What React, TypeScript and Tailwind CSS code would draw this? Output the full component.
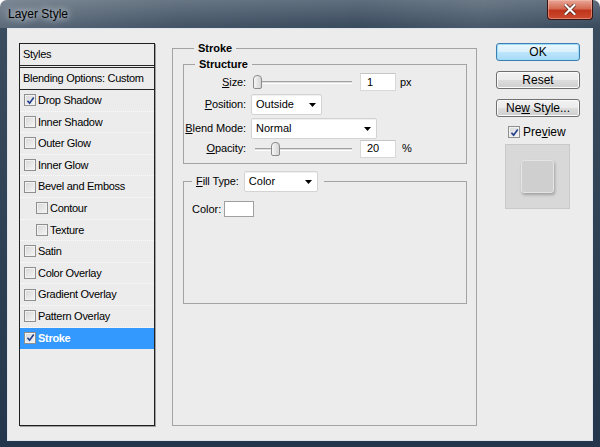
import React from 'react'

type StyleItem = {
  label: string
  checked?: boolean
  sub?: boolean
  active?: boolean
}

const styleItems: StyleItem[] = [
  { label: 'Drop Shadow', checked: true },
  { label: 'Inner Shadow' },
  { label: 'Outer Glow' },
  { label: 'Inner Glow' },
  { label: 'Bevel and Emboss' },
  { label: 'Contour', sub: true },
  { label: 'Texture', sub: true },
  { label: 'Satin' },
  { label: 'Color Overlay' },
  { label: 'Gradient Overlay' },
  { label: 'Pattern Overlay' },
  { label: 'Stroke', checked: true, active: true },
]

function Check({ checked }: { checked?: boolean }) {
  return (
    <span className="flex h-[12px] w-[12px] shrink-0 items-center justify-center border border-[#8e8f8f] bg-[linear-gradient(135deg,#d6d6d6,#f6f6f6)] shadow-[inset_0_0_0_1px_#f2f2f2]">
      {checked && (
        <svg viewBox="0 0 10 10" className="h-[9px] w-[9px]">
          <path d="M1.6 5.2 L4 7.9 L8.6 1.6" fill="none" stroke="#23408e" strokeWidth="1.8" />
        </svg>
      )}
    </span>
  )
}

function Arrow() {
  return (
    <svg viewBox="0 0 7 4" className="h-[4px] w-[7px]">
      <path d="M0 0 H7 L3.5 4 Z" fill="#000" />
    </svg>
  )
}

function Select({ value, width }: { value: string; width: string }) {
  return (
    <div
      className={`flex h-[21px] ${width} items-center justify-between rounded-[2px] border border-[#d3d3d3] bg-white pl-[4px] pr-[5px] text-[11px] text-black shadow-[inset_0_1px_0_#f0f0f0]`}
    >
      <span>{value}</span>
      <Arrow />
    </div>
  )
}

function Slider({ width, thumb }: { width: string; thumb: number }) {
  return (
    <div className={`relative h-[14px] ${width}`}>
      <div className="absolute left-0 right-0 top-[6px] h-[3px] border-t border-b border-t-[#a3a3a3] border-b-white bg-[#dcdcdc]" />
      {/* thumb */}
      <div
        className="absolute top-0 h-[14px] w-[9px] rounded-t-[4px] rounded-b-[2px] border border-[#8c8c8c] bg-[linear-gradient(90deg,#f6f6f6,#d4d4d4)]"
        style={{ left: thumb }}
      />
    </div>
  )
}

function NumInput({ value }: { value: string }) {
  return (
    <div className="flex h-[18px] w-[36px] items-center border border-[#d8d8d8] border-t-[#c6c6c6] bg-white pl-[6px] text-[11px] text-black">
      {value}
    </div>
  )
}

function Button({ children, primary }: { children: React.ReactNode; primary?: boolean }) {
  return (
    <button
      className={`flex h-[18px] w-[84px] items-center justify-center rounded-[3px] border text-[12px] leading-none text-black ${
        primary
          ? 'border-[#3c7fb1] bg-[linear-gradient(#eaf6fd_0%,#d9f0fc_49%,#bee6fd_50%,#a7d9f5_100%)] shadow-[inset_0_0_0_1px_#9edcf7]'
          : 'border-[#707070] bg-[linear-gradient(#f2f2f2_0%,#ebebeb_49%,#dddddd_50%,#cfcfcf_100%)] shadow-[inset_0_0_0_1px_#fbfbfb]'
      }`}
    >
      {children}
    </button>
  )
}

export default function App() {
  return (
    <div className="h-[447px] w-[600px] overflow-hidden rounded-t-[7px] bg-[linear-gradient(180deg,#5f6e7d_0px,#3b4c5f_26px,#2d3f52_60%,#23364b_100%)] font-['Liberation_Sans',Arial,sans-serif]">
      {/* Title bar */}
      <div className="flex h-[28px] items-start justify-between bg-[linear-gradient(100deg,rgba(255,255,255,0.18)_0%,rgba(255,255,255,0.05)_30%,rgba(255,255,255,0)_60%,rgba(255,255,255,0.08)_80%,rgba(255,255,255,0)_100%)]">
        <span className="ml-[8px] mt-[7px] text-[12px] leading-[15px] text-black [text-shadow:0_0_6px_rgba(230,236,242,0.9),0_0_10px_rgba(230,236,242,0.7)]">
          Layer Style
        </span>
        <div className="mr-[7px] flex h-[20px] w-[46px] items-center justify-center rounded-b-[4px] border border-t-0 border-[#3b1510] bg-[linear-gradient(#e8a898_0%,#d46a52_45%,#c0361c_55%,#cc4a30_100%)] shadow-[inset_0_0_0_1px_rgba(255,200,190,0.45)]">
          <svg viewBox="0 0 12 11" className="h-[11px] w-[12px]">
            <path d="M1.5 1 L10.5 10 M10.5 1 L1.5 10" stroke="#4a1a12" strokeWidth="3.6" strokeLinecap="square" />
            <path d="M1.5 1 L10.5 10 M10.5 1 L1.5 10" stroke="#ffffff" strokeWidth="2.2" strokeLinecap="square" />
          </svg>
        </div>
      </div>

      {/* Dialog body */}
      <div className="mx-[7px] flex h-[413px] items-start border border-[#dfe5eb] bg-[#ececec] text-[11px] text-black">
        {/* Styles list */}
        <div className="ml-[11px] mt-[14px] flex h-[383px] w-[136px] flex-col border border-[#1f1f1f] shadow-[1px_1px_0_#a0a0a0]">
          <div className="flex h-[22px] shrink-0 items-center border-b border-[#262626] pl-[3px] tracking-[-0.3px]">
            Styles
          </div>
          <div className="mt-[1px] flex h-[23px] shrink-0 items-center border-y border-[#262626] pl-[3px] tracking-[-0.3px]">
            Blending Options: Custom
          </div>
          {styleItems.map(item => (
            <div
              key={item.label}
              className={`flex h-[21.6px] shrink-0 items-center gap-[2px] border-b border-dotted tracking-[-0.3px] ${
                item.sub ? 'pl-[16px]' : 'pl-[4px]'
              } ${
                item.active
                  ? 'border-[#3399ff] bg-[#3399ff] font-bold text-white'
                  : 'border-[#fbfbfb]'
              }`}
            >
              <Check checked={item.checked} />
              <span>{item.label}</span>
            </div>
          ))}
        </div>

        {/* Stroke group */}
        <fieldset className="ml-[17px] mt-[12px] h-[385px] w-[305px] min-w-0 border border-[#a3a3a3] pb-0 pl-[10px] pr-[9px] pt-[2px]">
          <legend className="ml-[11px] px-[4px] text-[11px] font-bold leading-[14px]">Stroke</legend>

          {/* Structure */}
          <fieldset className="h-[107px] min-w-0 border border-[#a3a3a3] p-0">
            <legend className="ml-[11px] px-[4px] text-[11px] font-bold leading-[14px]">Structure</legend>

            <div className="mt-[1px] flex h-[20px] items-center">
              <span className="w-[62px] text-right tracking-[-0.1px]">
                <u>S</u>ize:
              </span>
              <div className="ml-[7px]">
                <Slider width="w-[99px]" thumb={0} />
              </div>
              <div className="ml-[8px]">
                <NumInput value="1" />
              </div>
              <span className="ml-[4px]">px</span>
            </div>

            <div className="mt-[2px] flex h-[21px] items-center">
              <span className="w-[62px] text-right tracking-[-0.1px]">
                <u>P</u>osition:
              </span>
              <div className="ml-[5px]">
                <Select value="Outside" width="w-[71px]" />
              </div>
            </div>

            <div className="mt-[3px] flex h-[21px] items-center">
              <span className="w-[62px] text-right tracking-[-0.1px]">
                <u>B</u>lend Mode:
              </span>
              <div className="ml-[5px]">
                <Select value="Normal" width="w-[126px]" />
              </div>
            </div>

            <div className="flex h-[19px] items-center">
              <span className="w-[62px] text-right tracking-[-0.1px]">
                <u>O</u>pacity:
              </span>
              <div className="ml-[9px]">
                <Slider width="w-[97px]" thumb={16} />
              </div>
              <div className="ml-[8px]">
                <NumInput value="20" />
              </div>
              <span className="ml-[6px]">%</span>
            </div>
          </fieldset>

          {/* Fill type */}
          <fieldset className="mt-[7px] h-[133px] min-w-0 border border-[#a3a3a3] p-0">
            <legend className="ml-[8px] flex items-center gap-[5px] pl-[4px] pr-[6px]">
              <span className="tracking-[-0.1px]">
                <u>F</u>ill Type:
              </span>
              <Select value="Color" width="w-[74px]" />
            </legend>
            <div className="mt-[9px] flex items-center pl-[8px]">
              <span>Color:</span>
              <div className="ml-[3px] h-[16px] w-[30px] border border-[#a0a0a0] bg-white" />
            </div>
          </fieldset>
        </fieldset>

        {/* Buttons */}
        <div className="ml-[19px] mt-[14px] flex w-[84px] flex-col">
          <Button primary>OK</Button>
          <div className="mt-[10px]">
            <Button>Reset</Button>
          </div>
          <div className="mt-[10px]">
            <Button>
              Ne<u>w</u>&nbsp;Style...
            </Button>
          </div>
          <div className="mt-[9px] flex items-center gap-[3px] pl-[12px]">
            <Check checked />
            <span className="text-[12px] leading-none">
              Pre<u>v</u>iew
            </span>
          </div>
          <div className="ml-[9px] mt-[6px] flex h-[65px] w-[65px] items-center justify-center border border-[#c9c9c9] bg-[#d8d8d8] bg-[radial-gradient(#cfcfcf_0.6px,transparent_0.7px)] bg-[length:2px_2px]">
            <div className="h-[33px] w-[33px] rounded-[3px] border border-[#e4e4e4] bg-[#cfcfcf] shadow-[1px_2px_3px_rgba(0,0,0,0.25)]" />
          </div>
        </div>
      </div>
    </div>
  )
}
